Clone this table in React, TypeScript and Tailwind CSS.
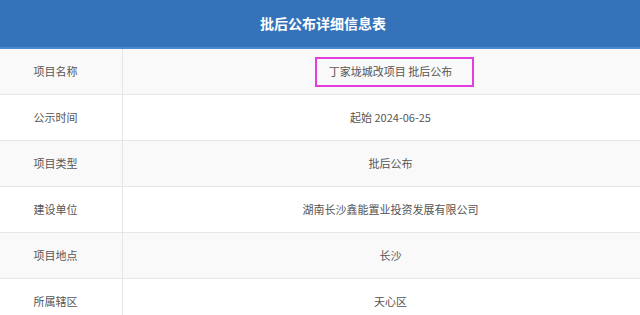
const rows = [
  { label: '项目名称', value: '丁家垅城改项目 批后公布', highlight: true },
  { label: '公示时间', value: '起始 2024-06-25' },
  { label: '项目类型', value: '批后公布' },
  { label: '建设单位', value: '湖南长沙鑫能置业投资发展有限公司' },
  { label: '项目地点', value: '长沙' },
  { label: '所属辖区', value: '天心区' },
]

export default function App() {
  return (
    <div className="w-[640px] h-[315px] overflow-hidden bg-white text-[11px] text-[#555]" style={{ fontFamily: '"Microsoft YaHei", "Noto Sans CJK SC", sans-serif' }}>
      <div className="h-[49px] bg-[#3473ba] border-b-2 border-[#4a8ad0] flex items-center justify-center pl-[6px]">
        <h1 className="text-white text-[14px] font-bold">批后公布详细信息表</h1>
      </div>
      <div>
        {rows.map((row, i) => (
          <div key={row.label} className={`flex h-[46px] border-b border-[#e6e6e6] ${i % 2 === 0 ? 'bg-[#f9f9f9]' : 'bg-white'}`}>
            <div className="w-[123px] shrink-0 border-r border-[#e6e6e6] flex items-center justify-center pr-[11px]">
              {row.label}
            </div>
            <div className="flex-1 flex items-center justify-center pl-[18px]">
              {row.highlight ? (
                <span className="border-2 border-[#e23ee0] pl-[12px] pr-[20px] h-[30px] flex items-center ml-[8px]">{row.value}</span>
              ) : (
                row.value
              )}
            </div>
          </div>
        ))}
      </div>
    </div>
  )
}
